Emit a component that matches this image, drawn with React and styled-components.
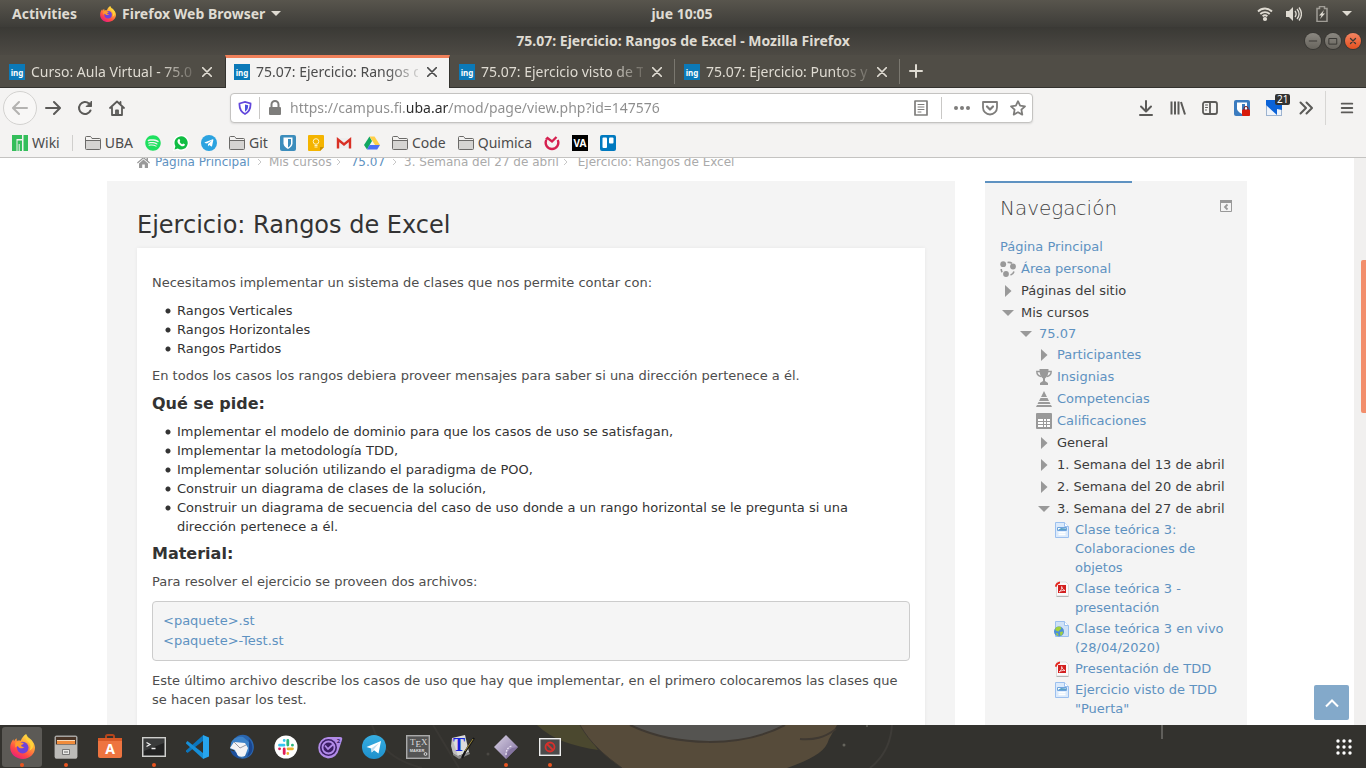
import React from 'react';
import styled, { createGlobalStyle, css } from 'styled-components';
import { FaSpotify, FaTelegramPlane } from 'react-icons/fa';

const UI = '"Noto Sans", "Open Sans", sans-serif';
const PAGE = '"DejaVu Sans", sans-serif';
const LINK = '#5e92c1';

const GlobalStyle = createGlobalStyle`
  *, *::before, *::after { box-sizing: border-box; }
  html, body { margin: 0; padding: 0; }
  button { font: inherit; color: inherit; background: none; border: 0; padding: 0; margin: 0; cursor: pointer; }
  a { color: inherit; text-decoration: none; }
  ul { margin: 0; padding: 0; }
  svg { display: block; flex: none; }
`;

/* ---------- desktop shell ---------- */

const Desktop = styled.div`
  display: flex;
  flex-direction: column;
  height: 100vh;
  min-height: 400px;
  overflow: hidden;
  font-family: ${UI};
  font-size: 14px;
  background: #33322e;
`;

const TopPanel = styled.header`
  display: grid;
  grid-template-columns: 1fr auto 1fr;
  align-items: center;
  height: 27px;
  flex: none;
  padding: 0 14px 0 12px;
  color: #dfdbd2;
  font-weight: 700;
  background: linear-gradient(#58554d, #3d3c38);
`;

const PanelGroup = styled.div`
  display: flex;
  align-items: center;
  justify-content: ${(p) => (p.$end ? 'flex-end' : 'flex-start')};
  gap: ${(p) => (p.$end ? '12px' : '23px')};
`;

const PanelButton = styled.button`
  display: flex;
  align-items: center;
  gap: 6px;
  line-height: 20px;
`;

const TitleBar = styled.div`
  display: grid;
  grid-template-columns: 1fr auto 1fr;
  align-items: center;
  height: 28px;
  flex: none;
  padding: 0 5px;
  color: #dfdbd2;
  background: linear-gradient(#3a3935, #4d4a44);
`;

const WindowTitle = styled.h1`
  grid-column: 2;
  margin: 0;
  font-size: 14px;
  font-weight: 700;
  line-height: 20px;
`;

const WindowControls = styled.div`
  display: flex;
  justify-content: flex-end;
  gap: 4px;
`;

const WindowButton = styled.button`
  display: grid;
  place-items: center;
  width: 16px;
  height: 16px;
  border-radius: 50%;
  color: #3a3935;
  background: ${(p) => (p.$close ? 'linear-gradient(#f38562, #e4501f)' : 'linear-gradient(#8b8881, #67645d)')};
  box-shadow: 0 0 0 1px #393834;
`;

/* ---------- browser chrome ---------- */

const TabStrip = styled.nav`
  display: flex;
  height: 33px;
  flex: none;
  background: #504d46;
  border-bottom: 1px solid #33322e;
`;

const Tab = styled.div`
  display: flex;
  align-items: center;
  flex: 0 1 225px;
  min-width: 80px;
  gap: 6px;
  padding: 1px 9px 0;
  color: #dfdbd2;
  border-right: 1px solid transparent;
  ${(p) => p.$divided && css`
    border-image: linear-gradient(transparent 5px, #7a776f 5px, #7a776f 28px, transparent 28px) 1;
  `}
  ${(p) => p.$active && css`
    color: #4c4c4c;
    background: #f4f3f2;
    border-top: 3px solid #f0805a;
    border-left: 1px solid #33322e;
    border-right: 1px solid #33322e;
    margin-bottom: -1px;
    padding: 0 9px 2px 8px;
  `}
`;

const TabLabel = styled.button`
  flex: 1;
  min-width: 0;
  overflow: hidden;
  white-space: nowrap;
  text-align: left;
  line-height: 20px;
  mask-image: linear-gradient(90deg, #000 80%, #0003 100%);
`;

const IconButton = styled.button`
  position: relative;
  display: grid;
  place-items: center;
  width: ${(p) => p.$w || 32}px;
  height: ${(p) => p.$h || 32}px;
  flex: none;
  color: ${(p) => p.$color || '#5b5a58'};
`;

const BackButton = styled(IconButton)`
  width: 34px;
  height: 34px;
  color: #b4b3b1;
  background: #f8f7f6;
  border: 1px solid #d3d2d0;
  border-radius: 50%;
`;

const Toolbar = styled.div`
  display: flex;
  align-items: center;
  height: 40px;
  flex: none;
  padding: 0 3px;
  background: #f4f3f2;
`;

const Spacer = styled.div`
  flex: 0 1 97px;
`;

const AddressBar = styled.form`
  display: flex;
  align-items: center;
  flex: 1;
  min-width: 0;
  height: 30px;
  background: #fff;
  border: 1px solid #c4c3c1;
  border-radius: 4px;
  box-shadow: 0 1px 2px #0000001a;
`;

const AddressInput = styled.input`
  flex: 1;
  min-width: 0;
  height: 24px;
  padding: 0;
  border: 0;
  outline: 0;
  font: 14px/24px ${UI};
  color: transparent;
  background: linear-gradient(90deg, #8d8d8d 117px, #2a2a2a 117px, #2a2a2a 159px, #8d8d8d 159px);
  background-clip: text;
  -webkit-background-clip: text;
`;

const Rule = styled.span`
  width: 1px;
  flex: none;
  height: ${(p) => p.$h}px;
  margin: ${(p) => p.$m || '0'};
  background: ${(p) => p.$color || '#c9c8c6'};
`;

const CountBadge = styled.span`
  position: absolute;
  top: 2px;
  left: 17px;
  padding: 0 2px;
  font-size: 10px;
  line-height: 11px;
  color: #fff;
  background: #333;
  border-radius: 2px;
`;

const BookmarkBar = styled.nav`
  display: flex;
  align-items: center;
  gap: 12px;
  height: 30px;
  flex: none;
  padding: 0 12px;
  color: #4c4c4c;
  background: #f4f3f2;
  border-bottom: 1px solid #c4c3c1;
`;

const Bookmark = styled.a`
  display: flex;
  align-items: center;
  gap: 4px;
  line-height: 20px;
`;

const RoundMark = styled.span`
  display: grid;
  place-items: center;
  width: 16px;
  height: 16px;
  border-radius: 50%;
  color: ${(p) => p.$fg};
  background: ${(p) => p.$bg};
`;

/* ---------- course page ---------- */

const Viewport = styled.main`
  position: relative;
  display: flex;
  flex: 1;
  min-height: 0;
  overflow: hidden;
  background: #fff;
  font-family: ${PAGE};
  font-size: 13px;
  line-height: 19px;
  color: #4d4d4d;
`;

const PageScroll = styled.div`
  flex: 1;
  min-width: 0;
  overflow: hidden;
`;

const Container = styled.div`
  max-width: 1140px;
  margin: 0 auto;
`;

const ScrollTrack = styled.div`
  width: 12px;
  padding: 102px 0 0 7px;
  background: #f1f0ef;
`;

const ScrollThumb = styled.div`
  height: 153px;
  background: #f28e6b;
  border-radius: 2px 0 0 2px;
`;

const Breadcrumb = styled.nav`
  display: flex;
  align-items: center;
  height: 20px;
  margin-top: -6px;
  margin-bottom: 9px;
  padding-left: 30px;
  font-size: 12px;
  color: #aaa;
`;

const HomeLink = styled.a`
  margin-right: 4px;
`;

const Crumb = styled.a`
  color: ${(p) => (p.$link ? LINK : '#aaa')};
`;

const Chevron = styled.span`
  display: grid;
  place-items: center;
  width: 19px;
  color: #c8c8c8;
  ${(p) => p.$near && 'justify-content: start; padding-left: 4px;'}
`;

const Columns = styled.div`
  display: flex;
  gap: 30px;
  align-items: flex-start;
`;

const Article = styled.article`
  flex: 1;
  min-width: 0;
  padding: 30px 30px 90px;
  background: #f4f4f4;
`;

const PageTitle = styled.h2`
  margin: 0 0 9px;
  font-size: 24px;
  font-weight: 400;
  line-height: 28px;
  color: #333;
`;

const Sheet = styled.div`
  padding: 25px 15px 60px;
  background: #fff;
  box-shadow: 0 0 4px #0000000f;
`;

const Paragraph = styled.p`
  margin: 0 0 9px;
`;

const Bullets = styled.ul`
  margin: 0 0 8px;
  list-style: none;
  color: #333;
`;

const Bullet = styled.li`
  padding-left: 25px;
  background: radial-gradient(circle at 3px 3px, #333 2px, transparent 3px) 13px 7px / 6px 6px no-repeat;
`;

const SectionTitle = styled.h3`
  margin: 0 0 8px;
  font-size: 16px;
  font-weight: 700;
  line-height: 20px;
  color: #333;
`;

const FileBox = styled.div`
  display: flex;
  flex-direction: column;
  margin: 10px 0;
  padding: 9px 10px;
  line-height: 20px;
  color: ${LINK};
  background: #f5f5f5;
  border: 1px solid #ccc;
  border-radius: 4px;
`;

const SideBlock = styled.aside`
  flex: 0 0 262px;
  padding: 0 15px 60px;
  background: linear-gradient(${LINK}, ${LINK}) 0 0 / 147px 2px no-repeat #f4f4f4;
`;

const SideHeader = styled.div`
  display: flex;
  justify-content: space-between;
  padding: 14px 0 16px;
  color: #999;
`;

const SideTitle = styled.h2`
  margin: 0;
  font-size: 20px;
  font-weight: 200;
  line-height: 26px;
  color: #444;
`;

const CollapseButton = styled.button`
  height: 12px;
  margin-top: 5px;
`;

const Tree = styled.ul`
  list-style: none;
  ${(p) => p.$nested && 'margin-top: -1px; padding-left: 18px;'}
`;

const TreeRow = styled.div`
  display: flex;
  align-items: flex-start;
  gap: 5px;
  padding-bottom: ${(p) => (p.$tight ? 2 : 3)}px;
`;

const TreeLink = styled.a`
  color: ${LINK};
`;

const TreeText = styled.span`
  color: #3c3c3c;
`;

const TreeIcon = styled.span`
  flex: none;
  width: 16px;
  height: 16px;
  margin-top: 2px;
`;

const TopButton = styled.button`
  position: absolute;
  right: 17px;
  bottom: 5px;
  display: grid;
  place-items: center;
  width: 35px;
  height: 35px;
  color: #fff;
  background: #83a9ca;
  border-radius: 2px;
`;

/* ---------- dock ---------- */

const Dock = styled.footer`
  position: relative;
  display: flex;
  align-items: center;
  gap: 4px;
  height: 43px;
  flex: none;
  padding: 0 2px;
  overflow: hidden;
  background: #33322e;
`;

const Wallpaper = styled.svg`
  position: absolute;
  top: 0;
  left: 0;
`;

const DockItem = styled.button`
  position: relative;
  display: grid;
  place-items: center;
  width: 40px;
  height: 40px;
  border-radius: 3px;
  background: ${(p) => (p.$active ? '#5c5a56' : 'transparent')};
  &::after {
    content: '';
    display: ${(p) => (p.$running ? 'block' : 'none')};
    position: absolute;
    bottom: 0;
    left: 18px;
    width: 4px;
    height: 4px;
    border-radius: 50%;
    background: #e95420;
  }
`;

const AppsButton = styled(DockItem)`
  margin-left: auto;
`;

/* ---------- drawings ---------- */

const Line = ({ s = 16, w = 2, children, ...rest }) => (
  <svg width={s} height={s} viewBox="0 0 16 16" fill="none" stroke="currentColor" strokeWidth={w} strokeLinecap="round" strokeLinejoin="round" {...rest}>
    {children}
  </svg>
);

const Firefox = ({ s, id }) => (
  <svg width={s} height={s} viewBox="0 0 24 24">
    <defs>
      <linearGradient id={id} x1="0.8" y1="0" x2="0.2" y2="1">
        <stop offset="0" stopColor="#fff44f" /><stop offset=".35" stopColor="#ffa436" />
        <stop offset=".7" stopColor="#ff4a45" /><stop offset="1" stopColor="#e31587" />
      </linearGradient>
    </defs>
    <path fill={`url(#${id})`} d="M15.5 0c-.6 2 .2 3.700 1.600 5 .5-.8.500-1.400.400-2 3.900 2.800 6.500 6.300 6.500 10.300C24 19.400 18.700 24 12.300 24 5.600 24 .2 19.400.2 13 .2 9.500 1.700 6.800 3.300 5l.5 2.300c.5-1.400 1.400-2.600 2.500-3.300l.3 2.700c1-.4 2.300-.6 3.700-.2 1-2.700 2.800-5.100 5.200-6.500z" />
    <circle cx="12.200" cy="13" r="5.600" fill="#6f42d8" />
    <path fill="#ff9b2e" d="M5 8.500c2-1.700 4.200-1.500 5.800-.3 1 .2 2.400.3 2.300 1-.1.800-2 .9-2.300 1.700-.3 1.100 1.300 1.900 3 1.500-1.800 2-5.300 1.600-6.300-1L5 13z" />
    <path fill="#ffd23a" d="M17 7c3 2.500 3.500 6 1.500 9 3.500-1 4.500-4.500 3.500-7.500C20.500 6 17.500 4.500 15.500 0 14.500 3 15 5.500 17 7z" />
  </svg>
);

const Favicon = () => (
  <svg width="16" height="16" viewBox="0 0 16 16">
    <rect width="16" height="16" fill="#0b79b8" />
    <text x="8" y="12" textAnchor="middle" fontFamily="Noto Sans, sans-serif" fontWeight="700" fontSize="8" fill="#fff">ing</text>
  </svg>
);

const Caret = () => <svg width="10" height="6" viewBox="0 0 10 6"><path d="M0 0h10L5 5z" fill="currentColor" /></svg>;

const CloseX = () => <Line s={10} w={2.300}><path d="M1 1l14 14M15 1L1 15" /></Line>;

const Folder = () => (
  <svg width="16" height="16" viewBox="0 0 16 16">
    <path d="M.5 13.500v-11q0-1 1-1h4l1.500 2h7.500q1 0 1 1v9q0 1-1 1h-13q-1 0-1-1zM.5 5.500h15" fill="#d5d4d2" stroke="#6b6a68" />
    <path d="M1 2h4.500l1.200 2H15v1H1z" fill="#f4f3f2" />
  </svg>
);

const WhatsApp = () => (
  <svg width="16" height="16" viewBox="0 0 16 16">
    <path d="M0 16l1-4.500A8 8 0 1 1 4.500 15z" fill="#fff" />
    <path d="M1.500 14.500l.9-3.300A6.600 6.600 0 1 1 4.800 13.600z" fill="#10bd43" />
    <path d="M5.500 4.200c.5-.3 1-.2 1.200.3l.5 1.200c.1.300-.6 1-.6 1.100.6 1.200 1.400 1.900 2.500 2.400.200 0 .8-.9 1.100-.8l1.500.8c.4.3.1 1-.2 1.400-1 1.200-2.700.7-4-.2C5.800 9.300 4.800 8.100 4.500 6.800c-.2-1 .2-2 1-2.600z" fill="#fff" />
  </svg>
);

const Shield = ({ s = 16, bg, fg = '#fff' }) => (
  <svg width={s} height={s} viewBox="0 0 16 16">
    <rect width="16" height="16" rx="2" fill={bg} />
    <path d="M3.500 2.500h9v6c0 2.500-2.500 4.500-4.500 5.500-2-1-4.500-3-4.500-5.500z" fill={fg} />
    <path d="M8 4h3v4.500c0 1.500-1.500 3-3 4z" fill={bg} />
  </svg>
);

const PageIcon = () => (
  <svg width="16" height="16" viewBox="0 0 16 16">
    <path d="M1.500.5h9l4 4v11h-13z" fill="#dbeafb" stroke="#9cc0ef" />
    <path d="M10.500.5v4h4" fill="#fff" stroke="#9cc0ef" />
    <path d="M3.500 5.500h9v3h-9z" fill="#fff" stroke="#6fa4dd" /><path d="M4 8l3-2 5 .5V8z" fill="#5aa0c8" />
    <path d="M4.500 10.500h7m-7 2h7" stroke="#fff" strokeWidth="1.500" />
  </svg>
);

const PdfIcon = () => (
  <svg width="16" height="16" viewBox="0 0 16 16">
    <path d="M3 1h9l2.500 2.500V15H2.500V5z" fill="#fafafa" stroke="#dcdcdc" />
    <path d="M2.500 15.500h12" stroke="#b5b5b5" />
    <path d="M1 5.500C1 3 3 1 6 .5v2C4 3 3 4 2.500 6z" fill="#e5251d" />
    <rect x="4" y="4" width="8" height="8" fill="#d3201f" />
    <path d="M5 11c2-1 3-3.500 2.700-5.500.3 2 1.800 3.700 3.300 4-2-.3-4 .2-6 1.500z" fill="none" stroke="#fff" strokeWidth=".7" />
  </svg>
);

const UrlIcon = () => (
  <svg width="16" height="16" viewBox="0 0 16 16">
    <path d="M1.500.5h9l4 4v11h-13z" fill="#cfe2f7" stroke="#9cc0ef" /><path d="M10.500.5v4h4" fill="#fff" stroke="#9cc0ef" />
    <circle cx="5" cy="10.500" r="5" fill="#4d8fd6" />
    <path d="M1 8c2-3 5-3 6-1.500S5.500 9 5 10s-2.500 0-3-.5zM6 11l3-.5c0 2-1 3.500-2.500 4.500zM2 12l2 .5.500 2.500C3 15 2 13.500 2 12z" fill="#a4d13a" />
  </svg>
);

const ArrowRight = () => <svg width="16" height="16" viewBox="0 0 16 16"><path d="M5 2l6.500 6L5 14z" fill="#999" /></svg>;
const ArrowDown = () => <svg width="16" height="16" viewBox="0 0 16 16"><path d="M2 5h12L8 11z" fill="#999" /></svg>;

const Dashboard = () => (
  <svg width="16" height="16" viewBox="0 0 16 16" fill="#999">
    <circle cx="3.200" cy="3.200" r="2.900" /><circle cx="13" cy="5.500" r="2.900" /><circle cx="6" cy="13" r="2.900" />
    <path d="M7.500 1.500c2-.3 3.500.1 4.500.8M14 10.500c-.5 1.700-1.800 3-3.500 3.600M1.200 8c0 1.300.4 2.300 1 3.200" fill="none" stroke="#999" strokeWidth="1.600" />
  </svg>
);

const Trophy = () => (
  <svg width="16" height="16" viewBox="0 0 16 16" fill="#999">
    <path d="M3.500 0h9c0 5-1 8-3.500 9.500V12l3 2v2H4v-2l3-2V9.500C4.500 8 3.500 5 3.500 0z" />
    <path d="M4 2.500H.8C.8 5 2.500 7 5 7.500M12 2.500h3.200C15.200 5 13.500 7 11 7.500" fill="none" stroke="#999" strokeWidth="1.400" />
  </svg>
);

const Pyramid = () => (
  <svg width="16" height="16" viewBox="0 0 16 16" fill="#999">
    <path d="M8 0l3 6H5zM4.500 7h7L13 10H3zM2.500 11h11l1 2h-13zM1 14h14l1 2H0z" />
  </svg>
);

const Grades = () => (
  <svg width="16" height="16" viewBox="0 0 16 16">
    <rect width="16" height="16" rx="1" fill="#999" />
    <path d="M2 6h5v2H2zm6 0h2v2H8zm3 0h3v2h-3zM2 9h5v2H2zm6 0h2v2H8zm3 0h3v2h-3zM2 12h5v2H2zm6 0h2v2H8zm3 0h3v2h-3z" fill="#fff" />
  </svg>
);

const ICONS = { right: ArrowRight, down: ArrowDown, dash: Dashboard, trophy: Trophy, pyramid: Pyramid, grades: Grades, page: PageIcon, pdf: PdfIcon, url: UrlIcon };

const Telegram = ({ s }) => (
  <svg width={s} height={s} viewBox="0 0 24 24">
    <defs><linearGradient id="tg" x2="0" y2="1"><stop offset="0" stopColor="#37aee2" /><stop offset="1" stopColor="#1e90cc" /></linearGradient></defs>
    <circle cx="12" cy="12" r="12" fill="url(#tg)" />
    <path d="M4.500 12L19 6l-2.500 12.500-4.500-3.300-2.300 2.300-.5-4z" fill="#fff" /><path d="M9.200 13.500L17 8l-5.500 6.700-1.800 2.800z" fill="#c3dff0" />
  </svg>
);

const WallpaperArt = () => (
  <Wallpaper width="1366" height="43" viewBox="0 0 1366 43" aria-hidden="true">
    <path d="M537 0h45l16 25c-25-4-45-10-61-25z" fill="#4b482f" />
    <path d="M580 0h257l-8 14c-4 14-18 20-42 29H622C604 30 590 18 580 0z" fill="#564b3a" />
    <path d="M630 0c46 22 112 23 155 0z" fill="#555451" />
    <path d="M630 0c46 22 112 23 155 0M800 14c14 1 24-1 36-10" fill="none" stroke="#3f3932" strokeWidth="2" />
    <path d="M580 0c10 18 24 30 42 43" fill="none" stroke="#3d3831" />
    <path d="M892 0c-1 17-8 32-22 43" fill="none" stroke="#3e3c38" strokeWidth="2" />
    <path d="M372 0c8 25 24 36 50 43M433 0l26 43" fill="none" stroke="#3a3834" strokeWidth="2" />
    <circle cx="844" cy="20" r="1.500" fill="#65645c" /><circle cx="867" cy="1" r="1" fill="#65645c" /><circle cx="488" cy="29" r="1.500" fill="#4a4843" />
    <rect x="1161" width="2" height="14" fill="#605f5b" />
  </Wallpaper>
);

const DOCK = [
  { name: 'Firefox', active: true, running: true, icon: <Firefox s={25} id="ffDock" /> },
  { name: 'Files', running: true, icon: (
    <svg width="24" height="24" viewBox="0 0 24 24">
      <rect x=".5" y=".5" width="23" height="23" rx="2" fill="#a5a4a1" /><rect x="2" y="2" width="20" height="8" fill="#4a3527" />
      <path d="M3 5h18v4H3z" fill="#f08c3c" /><path d="M3 5h18v1H3z" fill="#f6d9b8" /><rect x="1" y="9.500" width="22" height="14" rx="1" fill="#bcbbb8" />
      <rect x="8" y="14" width="8" height="6" rx="1" fill="#777" /><rect x="9" y="15" width="6" height="4" fill="#e8e8e6" /><path d="M10 17h4" stroke="#666" />
    </svg>) },
  { name: 'Software', icon: (
    <svg width="24" height="25" viewBox="0 0 24 25">
      <path d="M8 6V2.500Q8 1 9.500 1h5Q16 1 16 2.500V6" fill="none" stroke="#b5451c" strokeWidth="2" />
      <path d="M0 4h24v18q0 2-2 2H2q-2 0-2-2z" fill="#ee7440" /><path d="M0 4h24v3H0z" fill="#d95a27" />
      <text x="12" y="20" textAnchor="middle" fontFamily="Noto Sans, sans-serif" fontWeight="700" fontSize="14" fill="#fff">A</text>
    </svg>) },
  { name: 'Terminal', running: true, icon: (
    <svg width="24" height="20" viewBox="0 0 24 20">
      <rect x=".7" y=".7" width="22.600" height="18.600" fill="#3a3b3b" stroke="#cfcfcd" strokeWidth="1.400" /><path d="M2 14L22 6v12H2z" fill="#222" />
      <path d="M4.500 5.500l3.500 2-3.500 2M9.500 11.500h4" stroke="#eee" strokeWidth="1.300" fill="none" />
    </svg>) },
  { name: 'Visual Studio Code', icon: (
    <svg width="24" height="24" viewBox="0 0 24 24">
      <path d="M17 6L1.500 18 0 16.500v-1L17.300 0z" fill="#0b75bc" /><path d="M17 18L1.500 6 0 7.500v1L17.300 24z" fill="#168fd8" />
      <path d="M17 0l6 2.500v19L17 24z" fill="#27a5ee" />
    </svg>) },
  { name: 'Thunderbird', icon: (
    <svg width="26" height="26" viewBox="0 0 26 26">
      <path d="M5 5C9 0 17-1 21 4c5 5 5 12 1 17-3 3-7 4-11 4 6-2 8-7 8-11z" fill="#2a66b0" />
      <path d="M20 5c5 6 5 14-2 18 2-4 3-9 1-13z" fill="#1a4690" />
      <path d="M2 9C4 4 9 2 14 3l6 5v9l-6 7c-3 0-6-1-7-3l-2-5-4-1z" fill="#3d82c8" />
      <path d="M5 8l11 1 3 5-3 8q-5 2-8-1l-2-5-5-2z" fill="#f3f3f5" /><path d="M5 8l6 6 6-3" stroke="#9a9aa2" fill="none" /><path d="M1 16q3 8 11 9-4-3-5-7z" fill="#1d4f9c" />
    </svg>) },
  { name: 'Slack', icon: (
    <svg width="24" height="24" viewBox="0 0 24 24" strokeWidth="2.800" strokeLinecap="round">
      <circle cx="12" cy="12" r="11.500" fill="#fff" />
      <path d="M5.500 10.200h4.500M10.200 5.500v.1" stroke="#36c5f0" /><path d="M13.800 5.500v4.500M18.500 10.200h-.1" stroke="#2eb67d" />
      <path d="M14 13.800h4.500M13.800 18.500v-.1" stroke="#ecb22e" /><path d="M10.200 14v4.500M5.500 13.800h.1" stroke="#e01e5a" />
    </svg>) },
  { name: 'Planner', icon: (
    <svg width="26" height="24" viewBox="0 0 26 24">
      <path d="M11 2h12q3 0 2 3l-3 9q-2 9-11 9.500A10.800 10.800 0 0 1 11 2z" fill="#b28be8" /><circle cx="11.500" cy="12.500" r="8.500" fill="#3c1e66" />
      <circle cx="11.500" cy="12.500" r="6" fill="none" stroke="#b28be8" strokeWidth="1.800" /><path d="M8 10.500l3 3.500 5-4.500" stroke="#b28be8" strokeWidth="1.800" fill="none" />
      <text x="21.500" y="8" textAnchor="middle" fontFamily="Noto Sans, sans-serif" fontWeight="700" fontSize="6" fill="#3c1e66">2</text>
    </svg>) },
  { name: 'Telegram', icon: <Telegram s={24} /> },
  { name: 'Texmaker', icon: (
    <svg width="24" height="24" viewBox="0 0 24 24">
      <rect x=".7" y=".7" width="22.600" height="22.600" fill="#555" stroke="#aaa" strokeWidth="1.400" />
      <text x="4" y="10" fontFamily="Liberation Serif, serif" fontSize="9" fill="#ddd">T<tspan dy="2">E</tspan><tspan dy="-2">X</tspan></text>
      <text x="11" y="17" textAnchor="middle" fontFamily="Liberation Sans, sans-serif" fontWeight="700" fontSize="4" fill="#ddd">MAKER</text>
      <circle cx="19.500" cy="19" r="1.400" fill="none" stroke="#ddd" />
    </svg>) },
  { name: 'Text editor', icon: (
    <svg width="26" height="26" viewBox="0 0 26 26">
      <path d="M3 4l13-3 4 17-11 4-5-3z" fill="#dcdcdc" /><path d="M4 19l5 3 11-4 1 2-11 5-6-4z" fill="#8a8a8a" /><path d="M3 4l-1 8 2 7 5 3z" fill="#bfbfbf" />
      <text x="10" y="17" textAnchor="middle" fontFamily="Liberation Serif, serif" fontWeight="700" fontSize="18" fill="#1523dc">T</text>
      <path d="M25 4l-9 14-3 6" stroke="#151515" strokeWidth="2.200" fill="none" /><path d="M24 5l-8 12" stroke="#b09b3c" strokeWidth=".9" />
    </svg>) },
  { name: 'Pharo Launcher', running: true, icon: (
    <svg width="24" height="24" viewBox="0 0 24 24">
      <defs><linearGradient id="gem" x2="1" y2="1"><stop offset="0" stopColor="#d9d2e4" /><stop offset="1" stopColor="#806f9f" /></linearGradient></defs>
      <path d="M12 0l12 12-12 12L0 12z" fill="url(#gem)" /><path d="M12 24q0-8 6-11l6-1z" fill="#84749f" />
      <path d="M12 20c0-5 2-8 6-9" stroke="#ebe4f5" strokeWidth="1.300" fill="none" strokeDasharray="2 1" />
    </svg>) },
  { name: 'Screenshot', running: true, icon: (
    <svg width="22" height="18" viewBox="0 0 22 18">
      <rect x=".7" y=".7" width="20.600" height="16.600" fill="#4b4b4b" stroke="#eee" strokeWidth="1.400" /><circle cx="11" cy="9" r="4.500" fill="none" stroke="#d8302b" strokeWidth="1.800" /><path d="M8 6l6 6" stroke="#d8302b" strokeWidth="1.800" />
    </svg>) },
];

const TABS = [
  { title: 'Curso: Aula Virtual - 75.0' },
  { title: '75.07: Ejercicio: Rangos d', active: true },
  { title: '75.07: Ejercicio visto de T', divided: true },
  { title: '75.07: Ejercicio: Puntos y', divided: true },
];

const BOOKMARKS = [
  { label: 'Wiki', icon: <svg width="16" height="16" viewBox="0 0 16 16" fill="#34be5b"><path d="M0 0h10v4H4.500v12H0zM5.500 5.500H10V16H5.500zM11.500 0H16v16h-4.500z" /><path d="M6.700 9h1v7h-1z" fill="#f4f3f2" /></svg> },
  { rule: true },
  { label: 'UBA', icon: <Folder /> },
  { name: 'Spotify', icon: <FaSpotify size={16} color="#1ee05f" /> },
  { name: 'WhatsApp', icon: <WhatsApp /> },
  { name: 'Telegram', icon: <RoundMark $bg="#2ca3e0" $fg="#fff"><FaTelegramPlane size={10} /></RoundMark> },
  { label: 'Git', icon: <Folder /> },
  { name: 'Bitwarden', icon: <Shield bg="#3c8dbc" /> },
  { name: 'Keep', icon: <svg width="16" height="16" viewBox="0 0 16 16"><path d="M1 0h14q1 0 1 1v11l-4 4H1q-1 0-1-1V1q0-1 1-1z" fill="#f4b400" /><path d="M16 12h-4v4z" fill="#c98f00" /><circle cx="8" cy="6.500" r="2.800" fill="none" stroke="#fff3c4" /><path d="M6.500 10.500h3m-3 1.500h3" stroke="#fff3c4" /></svg> },
  { name: 'Gmail', icon: <svg width="16" height="16" viewBox="0 0 16 16"><path d="M1 3h14v10H1z" fill="#eee" /><path d="M2 13.500V4.500l6 5 6-5v9" fill="none" stroke="#d93025" strokeWidth="2.400" /></svg> },
  { name: 'Drive', icon: <svg width="16" height="16" viewBox="0 0 16 16"><path d="M5.500 1.500L8 6 3 14.500 0 10z" fill="#11a861" /><path d="M5.500 1.500h5L16 10h-5z" fill="#ffcf48" /><path d="M5.500 10H16l-2.800 4.500H3z" fill="#4b6ef5" /></svg> },
  { label: 'Code', icon: <Folder /> },
  { label: 'Quimica', icon: <Folder /> },
  { name: 'Hub', icon: <svg width="16" height="16" viewBox="0 0 16 16"><path d="M2.300 5a6.300 6.300 0 1 0 11.400 0M2 4.500l1.500-1.500L8 6.500 12.500 2" fill="none" stroke="#d5204f" strokeWidth="2.400" /></svg> },
  { name: 'VisuAlgo', icon: <svg width="16" height="16" viewBox="0 0 16 16"><rect width="16" height="16" fill="#000" /><text x="8" y="12" textAnchor="middle" fontFamily="Noto Sans, sans-serif" fontWeight="700" fontSize="10" fill="#fff">VA</text></svg> },
  { name: 'Trello', icon: <svg width="16" height="16" viewBox="0 0 16 16"><rect width="16" height="16" rx="2" fill="#0079bf" /><rect x="2.500" y="2.500" width="4.500" height="10.500" rx="1" fill="#fff" /><rect x="9" y="2.500" width="4.500" height="6" rx="1" fill="#fff" /></svg> },
];

const NAV = [
  { text: 'Página Principal', link: true },
  { text: 'Área personal', link: true, icon: 'dash' },
  { text: 'Páginas del sitio', icon: 'right' },
  { text: 'Mis cursos', icon: 'down', children: [
    { text: '75.07', link: true, icon: 'down', children: [
      { text: 'Participantes', link: true, icon: 'right' },
      { text: 'Insignias', link: true, icon: 'trophy' },
      { text: 'Competencias', link: true, icon: 'pyramid' },
      { text: 'Calificaciones', link: true, icon: 'grades' },
      { text: 'General', icon: 'right' },
      { text: '1. Semana del 13 de abril', icon: 'right' },
      { text: '2. Semana del 20 de abril', icon: 'right' },
      { text: '3. Semana del 27 de abril', icon: 'down', children: [
        { text: 'Clase teórica 3: Colaboraciones de objetos', link: true, icon: 'page', tight: true },
        { text: 'Clase teórica 3 - presentación', link: true, icon: 'pdf', tight: true },
        { text: 'Clase teórica 3 en vivo (28/04/2020)', link: true, icon: 'url', tight: true },
        { text: 'Presentación de TDD', link: true, icon: 'pdf', tight: true },
        { text: 'Ejercicio visto de TDD "Puerta"', link: true, icon: 'page', tight: true },
      ] },
    ] },
  ] },
];

function NavTree({ items, nested }) {
  return (
    <Tree $nested={nested}>
      {items.map((item) => {
        const Icon = ICONS[item.icon];
        return (
          <li key={item.text}>
            <TreeRow $tight={item.tight}>
              {Icon && <TreeIcon><Icon /></TreeIcon>}
              {item.link ? <TreeLink href="#">{item.text}</TreeLink> : <TreeText>{item.text}</TreeText>}
            </TreeRow>
            {item.children && <NavTree items={item.children} nested />}
          </li>
        );
      })}
    </Tree>
  );
}

const Sep = ({ near }) => (
  <Chevron $near={near}><svg width="5" height="8" viewBox="0 0 5 8"><path d="M1 1l3 3-3 3" fill="none" stroke="currentColor" /></svg></Chevron>
);

export default function App() {
  return (
    <Desktop>
      <GlobalStyle />
      <TopPanel>
        <PanelGroup>
          <PanelButton>Activities</PanelButton>
          <PanelButton><Firefox s={16} id="ffPanel" />Firefox Web Browser<Caret /></PanelButton>
        </PanelGroup>
        <PanelButton>jue 10:05</PanelButton>
        <PanelGroup $end>
          <svg width="16" height="16" viewBox="0 0 16 16" fill="none" stroke="currentColor" strokeWidth="1.800"><path d="M1 5.500c4-4 10-4 14 0M3.300 8c2.700-2.600 6.700-2.600 9.400 0M5.600 10.300c1.400-1.200 3.400-1.200 4.800 0" /><circle cx="8" cy="13" r="1.200" fill="currentColor" /></svg>
          <svg width="17" height="16" viewBox="0 0 17 16"><path d="M1 5h3l4-4v14l-4-4H1z" fill="currentColor" /><path d="M10 5c1.500 2 1.500 4 0 6M12 3c2.500 3 2.500 7 0 10M14 1.500c3 4 3 9 0 13" fill="none" stroke="currentColor" strokeWidth="1.300" /></svg>
          <svg width="16" height="16" viewBox="0 0 16 16"><path d="M3 2.500h2.500v-2h5v2H13v13H3z" fill="none" stroke="#a09d96" strokeWidth="1.500" /><path d="M10 4L5 9.500h2.500L6 13l5-5.500H8.500z" fill="currentColor" /></svg>
          <Caret />
        </PanelGroup>
      </TopPanel>

      <TitleBar>
        <WindowTitle>75.07: Ejercicio: Rangos de Excel - Mozilla Firefox</WindowTitle>
        <WindowControls>
          <WindowButton aria-label="Minimizar"><Line s={10} w={1.600}><path d="M2 8h12" /></Line></WindowButton>
          <WindowButton aria-label="Maximizar"><Line s={10} w={1.600}><path d="M2 4h12v9H2z" /></Line></WindowButton>
          <WindowButton $close aria-label="Cerrar"><Line s={8} w={2.600}><path d="M3 3l10 10M13 3L3 13" /></Line></WindowButton>
        </WindowControls>
      </TitleBar>

      <TabStrip>
        {TABS.map((t) => (
          <Tab key={t.title} $active={t.active} $divided={t.divided}>
            <Favicon />
            <TabLabel>{t.title}</TabLabel>
            <IconButton $w={16} $h={16} $color="inherit" aria-label="Cerrar pestaña"><CloseX /></IconButton>
          </Tab>
        ))}
        <IconButton $color="#dfdbd2" aria-label="Nueva pestaña"><Line><path d="M8 2v12M2 8h12" /></Line></IconButton>
      </TabStrip>

      <Toolbar>
        <BackButton aria-label="Atrás"><Line><path d="M15 8H1.500M7 2L1 8l6 6" /></Line></BackButton>
        <IconButton aria-label="Adelante"><Line><path d="M1 8h13.500M9 2l6 6-6 6" /></Line></IconButton>
        <IconButton aria-label="Recargar"><Line><path d="M13.500 10.500A6 6 0 1 1 12 3.500L14 5.500" /><path d="M14.500 1.500v5h-5z" fill="currentColor" strokeWidth="1" /></Line></IconButton>
        <IconButton aria-label="Inicio"><Line w={1.800}><path d="M1 8l7-6.500L15 8M3 7.500V15h10V7.500M11.500 2v2" /><path d="M7 14.500v-4h2v4" /></Line></IconButton>
        <Spacer />
        <AddressBar onSubmit={(e) => e.preventDefault()}>
          <IconButton type="button" $w={28} $h={28} aria-label="Protección">
            <svg width="14" height="14" viewBox="0 0 14 14"><path d="M1.500 2.500L7 1l5.500 1.500c.3 5-1.500 8.500-5.500 10.500-4-2-5.800-5.500-5.500-10.500z" fill="none" stroke="#6247dc" strokeWidth="1.800" /><path d="M7 3.500l3.200.8c0 3-1 5.200-3.200 6.500z" fill="#4a4fdc" /></svg>
          </IconButton>
          <Rule $h={22} />
          <IconButton type="button" $w={30} $h={28} $color="#7e7d7b" aria-label="Conexión segura">
            <svg width="14" height="16" viewBox="0 0 14 16"><path d="M3.500 8V4.500a3.500 3.500 0 0 1 7 0V8" fill="none" stroke="currentColor" strokeWidth="2" /><rect x="1" y="7" width="12" height="8" rx="1" fill="currentColor" /></svg>
          </IconButton>
          <AddressInput aria-label="Dirección" defaultValue="https://campus.fi.uba.ar/mod/page/view.php?id=147576" />
          <IconButton type="button" $w={28} $h={28} $color="#7e7d7b" aria-label="Vista de lectura"><Line w={1.700}><path d="M2 1h12v14H2z" /><path d="M5 4.500h6M5 7h6M5 9.500h6M5 12h3" strokeWidth="1" /></Line></IconButton>
          <Rule $h={22} $m="0 6px" />
          <IconButton type="button" $w={28} $h={28} $color="#7e7d7b" aria-label="Acciones"><svg width="16" height="4" viewBox="0 0 16 4" fill="currentColor"><circle cx="2" cy="2" r="2" /><circle cx="8" cy="2" r="2" /><circle cx="14" cy="2" r="2" /></svg></IconButton>
          <IconButton type="button" $w={28} $h={28} $color="#7e7d7b" aria-label="Pocket"><Line w={1.800}><path d="M1 2h14v5.500a7 7 0 0 1-14 0z" /><path d="M5 6.500l3 3 3-3" strokeWidth="2.200" /></Line></IconButton>
          <IconButton type="button" $w={28} $h={28} $color="#7e7d7b" aria-label="Marcador"><Line w={1.800}><path d="M8 1.200l2.100 4.500 4.900.6-3.600 3.400.9 4.900L8 12.200l-4.300 2.400.9-4.900L1 6.300l4.900-.6z" /></Line></IconButton>
        </AddressBar>
        <Spacer />
        <IconButton aria-label="Descargas"><Line><path d="M8 1v9.500M3 6.500l5 5 5-5M2 15h12" /></Line></IconButton>
        <IconButton aria-label="Biblioteca"><Line><path d="M1.500 1.500v13M5 1.500v13M8.500 1.500v13M11 2l4 12.500" strokeLinecap="butt" /></Line></IconButton>
        <IconButton aria-label="Barra lateral"><Line w={1.800}><rect x="1" y="2" width="14" height="12" rx="2" /><path d="M8 2v12" /><path d="M3.500 5h2M3.500 7.500h2M3.500 10h1" strokeWidth="1" /></Line></IconButton>
        <IconButton aria-label="Bitwarden">
          <svg width="16" height="16" viewBox="0 0 16 16"><rect width="16" height="16" rx="2" fill="#3b7bbf" /><path d="M3 2.500h10v6c0 2.500-3 4.500-5 5.500-2-1-5-3-5-5.500z" fill="#fff" /><path d="M8 4h3v8H8z" fill="#3b7bbf" /><rect x="8" y="9.500" width="8" height="6.500" rx="1" fill="#d81b0c" /><path d="M10 10V8.500a2 2 0 0 1 4 0V10" fill="none" stroke="#8a1108" /></svg>
        </IconButton>
        <IconButton aria-label="Extensión">
          <svg width="16" height="16" viewBox="0 0 16 16"><rect x=".5" y=".5" width="15" height="15" fill="#eef3fa" stroke="#9db3d0" /><path d="M0 0h11l5 5v5l-5-1v6L0 5z" fill="#0b63d8" /></svg>
          <CountBadge>21</CountBadge>
        </IconButton>
        <IconButton aria-label="Más herramientas"><Line><path d="M2.500 2.500L8 8l-5.500 5.500M8.500 2.500L14 8l-5.500 5.500" /></Line></IconButton>
        <Rule $h={34} $m="0 5px 0 3px" $color="#d7d6d4" />
        <IconButton aria-label="Menú"><Line s={14} w={2.200}><path d="M2 3h12M2 8h12M2 13h12" /></Line></IconButton>
      </Toolbar>

      <BookmarkBar>
        {BOOKMARKS.map((b, i) => (b.rule
          ? <Rule key={i} $h={16} $color="#d0cfcd" />
          : <Bookmark key={i} href="#" aria-label={b.name}>{b.icon}{b.label}</Bookmark>))}
      </BookmarkBar>

      <Viewport>
        <PageScroll>
          <Container>
            <Breadcrumb>
              <HomeLink href="#" aria-label="Inicio">
                <svg width="14" height="12" viewBox="0 0 14 12" fill="#999"><path d="M6.500 1L0 6.500l.8 1L6.500 2.600l5.700 4.900.8-1-2-1.700V1.500H9.500v2z" /><path d="M2 7.500l4.500-3.900L11 7.500V12H7.800V8.500H5.200V12H2z" /></svg>
              </HomeLink>
              <Crumb $link href="#">Página Principal</Crumb><Sep />
              <Crumb href="#">Mis cursos</Crumb><Sep near />
              <Crumb $link href="#">75.07</Crumb><Sep />
              <Crumb href="#">3. Semana del 27 de abril</Crumb><Sep near />
              <Crumb href="#">Ejercicio: Rangos de Excel</Crumb>
            </Breadcrumb>
            <Columns>
              <Article>
                <PageTitle>Ejercicio: Rangos de Excel</PageTitle>
                <Sheet>
                  <Paragraph>Necesitamos implementar un sistema de clases que nos permite contar con:</Paragraph>
                  <Bullets>
                    <Bullet>Rangos Verticales</Bullet>
                    <Bullet>Rangos Horizontales</Bullet>
                    <Bullet>Rangos Partidos</Bullet>
                  </Bullets>
                  <Paragraph>En todos los casos los rangos debiera proveer mensajes para saber si una dirección pertenece a él.</Paragraph>
                  <SectionTitle>Qué se pide:</SectionTitle>
                  <Bullets>
                    <Bullet>Implementar el modelo de dominio para que los casos de uso se satisfagan,</Bullet>
                    <Bullet>Implementar la metodología TDD,</Bullet>
                    <Bullet>Implementar solución utilizando el paradigma de POO,</Bullet>
                    <Bullet>Construir un diagrama de clases de la solución,</Bullet>
                    <Bullet>Construir un diagrama de secuencia del caso de uso donde a un rango horizontal se le pregunta si una dirección pertenece a él.</Bullet>
                  </Bullets>
                  <SectionTitle>Material:</SectionTitle>
                  <Paragraph>Para resolver el ejercicio se proveen dos archivos:</Paragraph>
                  <FileBox>
                    <a href="#">&lt;paquete&gt;.st</a>
                    <a href="#">&lt;paquete&gt;-Test.st</a>
                  </FileBox>
                  <Paragraph>Este último archivo describe los casos de uso que hay que implementar, en el primero colocaremos las clases que se hacen pasar los test.</Paragraph>
                </Sheet>
              </Article>
              <SideBlock>
                <SideHeader>
                  <SideTitle>Navegación</SideTitle>
                  <CollapseButton aria-label="Minimizar bloque">
                    <svg width="12" height="12" viewBox="0 0 12 12"><path d="M.5 1v10.500h11V1z" fill="none" stroke="#999" /><path d="M0 0h12v3H0z" fill="#999" /><path d="M7.500 4.500L5 7l2.500 2.500" fill="none" stroke="#999" strokeWidth="1.800" /></svg>
                  </CollapseButton>
                </SideHeader>
                <NavTree items={NAV} />
              </SideBlock>
            </Columns>
          </Container>
        </PageScroll>
        <ScrollTrack><ScrollThumb /></ScrollTrack>
        <TopButton aria-label="Volver arriba"><Line><path d="M2 11.500l6-6 6 6" strokeLinecap="butt" strokeLinejoin="miter" /></Line></TopButton>
      </Viewport>

      <Dock>
        <WallpaperArt />
        {DOCK.map((d) => (
          <DockItem key={d.name} aria-label={d.name} $active={d.active} $running={d.running}>{d.icon}</DockItem>
        ))}
        <AppsButton aria-label="Mostrar aplicaciones">
          <svg width="16" height="16" viewBox="0 0 16 16" fill="#fff">
            {[2, 8, 14].map((y) => [2, 8, 14].map((x) => <circle key={`${x}-${y}`} cx={x} cy={y} r="1.700" />))}
          </svg>
        </AppsButton>
      </Dock>
    </Desktop>
  );
}
